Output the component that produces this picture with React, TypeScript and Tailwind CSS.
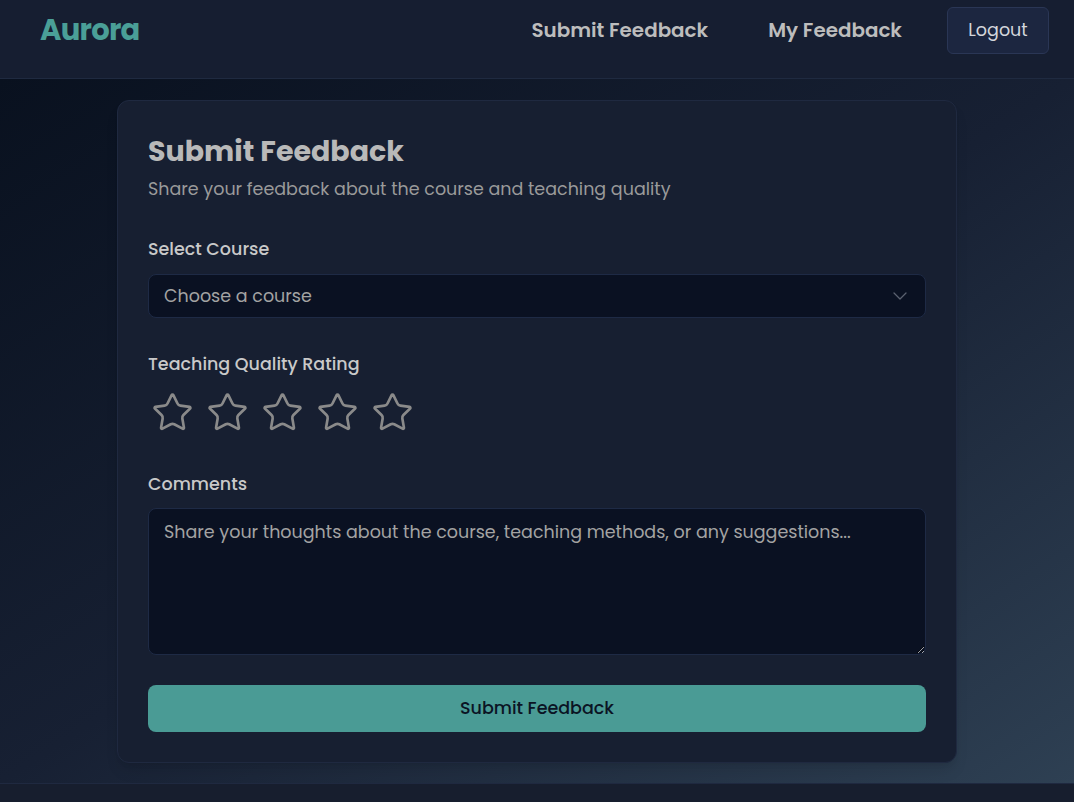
import { useState } from "react";
import { ChevronDown, Star } from "lucide-react";

const font = { fontFamily: "Poppins, 'DejaVu Sans', sans-serif" };

function Header() {
  return (
    <header className="h-[79px] flex items-start justify-between pl-10 pr-[25px] pt-[7px] bg-[#161e31] border-b border-[#1f2a40]">
      <div className="h-[47px] flex items-center text-[29px] font-bold text-[#4a9f97] tracking-tight">Aurora</div>
      <nav className="h-[47px] flex items-center">
        <a className="text-[19.9px] font-semibold text-[#bdbdbd] mr-[60px] cursor-pointer">Submit Feedback</a>
        <a className="text-[19.9px] font-semibold text-[#bdbdbd] mr-[45px] cursor-pointer">My Feedback</a>
        <button className="h-[47px] w-[102px] rounded-md border border-[#2a3655] bg-[#1c2640] text-[17.5px] text-[#d4d6dc]">
          Logout
        </button>
      </nav>
    </header>
  );
}

function Stars() {
  const [rating, setRating] = useState(0);
  return (
    <div className="flex gap-[12px] pl-[3px]">
      {[1, 2, 3, 4, 5].map((n) => (
        <button key={n} onClick={() => setRating(n)} className="block">
          <Star
            className="w-[43px] h-[43px] block"
            strokeWidth={1.5}
            color={n <= rating ? "#4a9f97" : "#8a8a8a"}
            fill={n <= rating ? "#4a9f97" : "none"}
          />
        </button>
      ))}
    </div>
  );
}

export default function App() {
  return (
    <div className="h-screen overflow-hidden flex flex-col bg-[#171e2e]" style={font}>
      <Header />
      <main className="bg-linear-to-br from-[#09111f] via-[#172033] to-[#2e4053] pt-[21px] pb-[20px]">
        <div className="w-[840px] mx-auto rounded-xl border border-[#1f2940] bg-[#171f31] px-[30px] pt-[30px] pb-[30px] shadow-lg">
          <h1 className="text-[28.5px] font-bold text-[#b9b9b9] leading-[40px]">Submit Feedback</h1>
          <p className="mt-[5px] text-[17.5px] leading-[26px] text-[#9a9a9a]">
            Share your feedback about the course and teaching quality
          </p>

          <label className="block mt-[34px] text-[17.5px] leading-[26px] font-medium text-[#c9c9c9]">Select Course</label>
          <div className="mt-[12px] h-[44px] rounded-lg border border-[#1e2a45] bg-[#0a1122] flex items-center justify-between pl-[15px] pr-[13px]">
            <span className="text-[17.5px] text-[#a3a3a3]">Choose a course</span>
            <ChevronDown className="w-6 h-6" strokeWidth={1.3} color="#5b6170" />
          </div>

          <label className="block mt-[33px] text-[17.5px] leading-[26px] font-medium text-[#c9c9c9]">
            Teaching Quality Rating
          </label>
          <div className="mt-[14px]">
            <Stars />
          </div>

          <label className="block mt-[37px] text-[17.5px] leading-[26px] font-medium text-[#c9c9c9]">Comments</label>
          <textarea
            className="mt-[11px] block w-full h-[147px] rounded-lg border border-[#1e2a45] bg-[#0a1122] px-[15px] py-[10px] text-[17.5px] leading-[26px] text-[#cccccc] placeholder:text-[#a3a3a3] outline-none"
            placeholder="Share your thoughts about the course, teaching methods, or any suggestions..."
            style={font}
          />

          <button className="mt-[30px] w-full h-[47px] rounded-lg bg-[#4a9b95] text-[17.5px] font-medium text-[#0b1424]">
            Submit Feedback
          </button>
        </div>
      </main>
      <footer className="flex-1 bg-[#171e2e] border-t border-[#1f2940]" />
    </div>
  );
}
